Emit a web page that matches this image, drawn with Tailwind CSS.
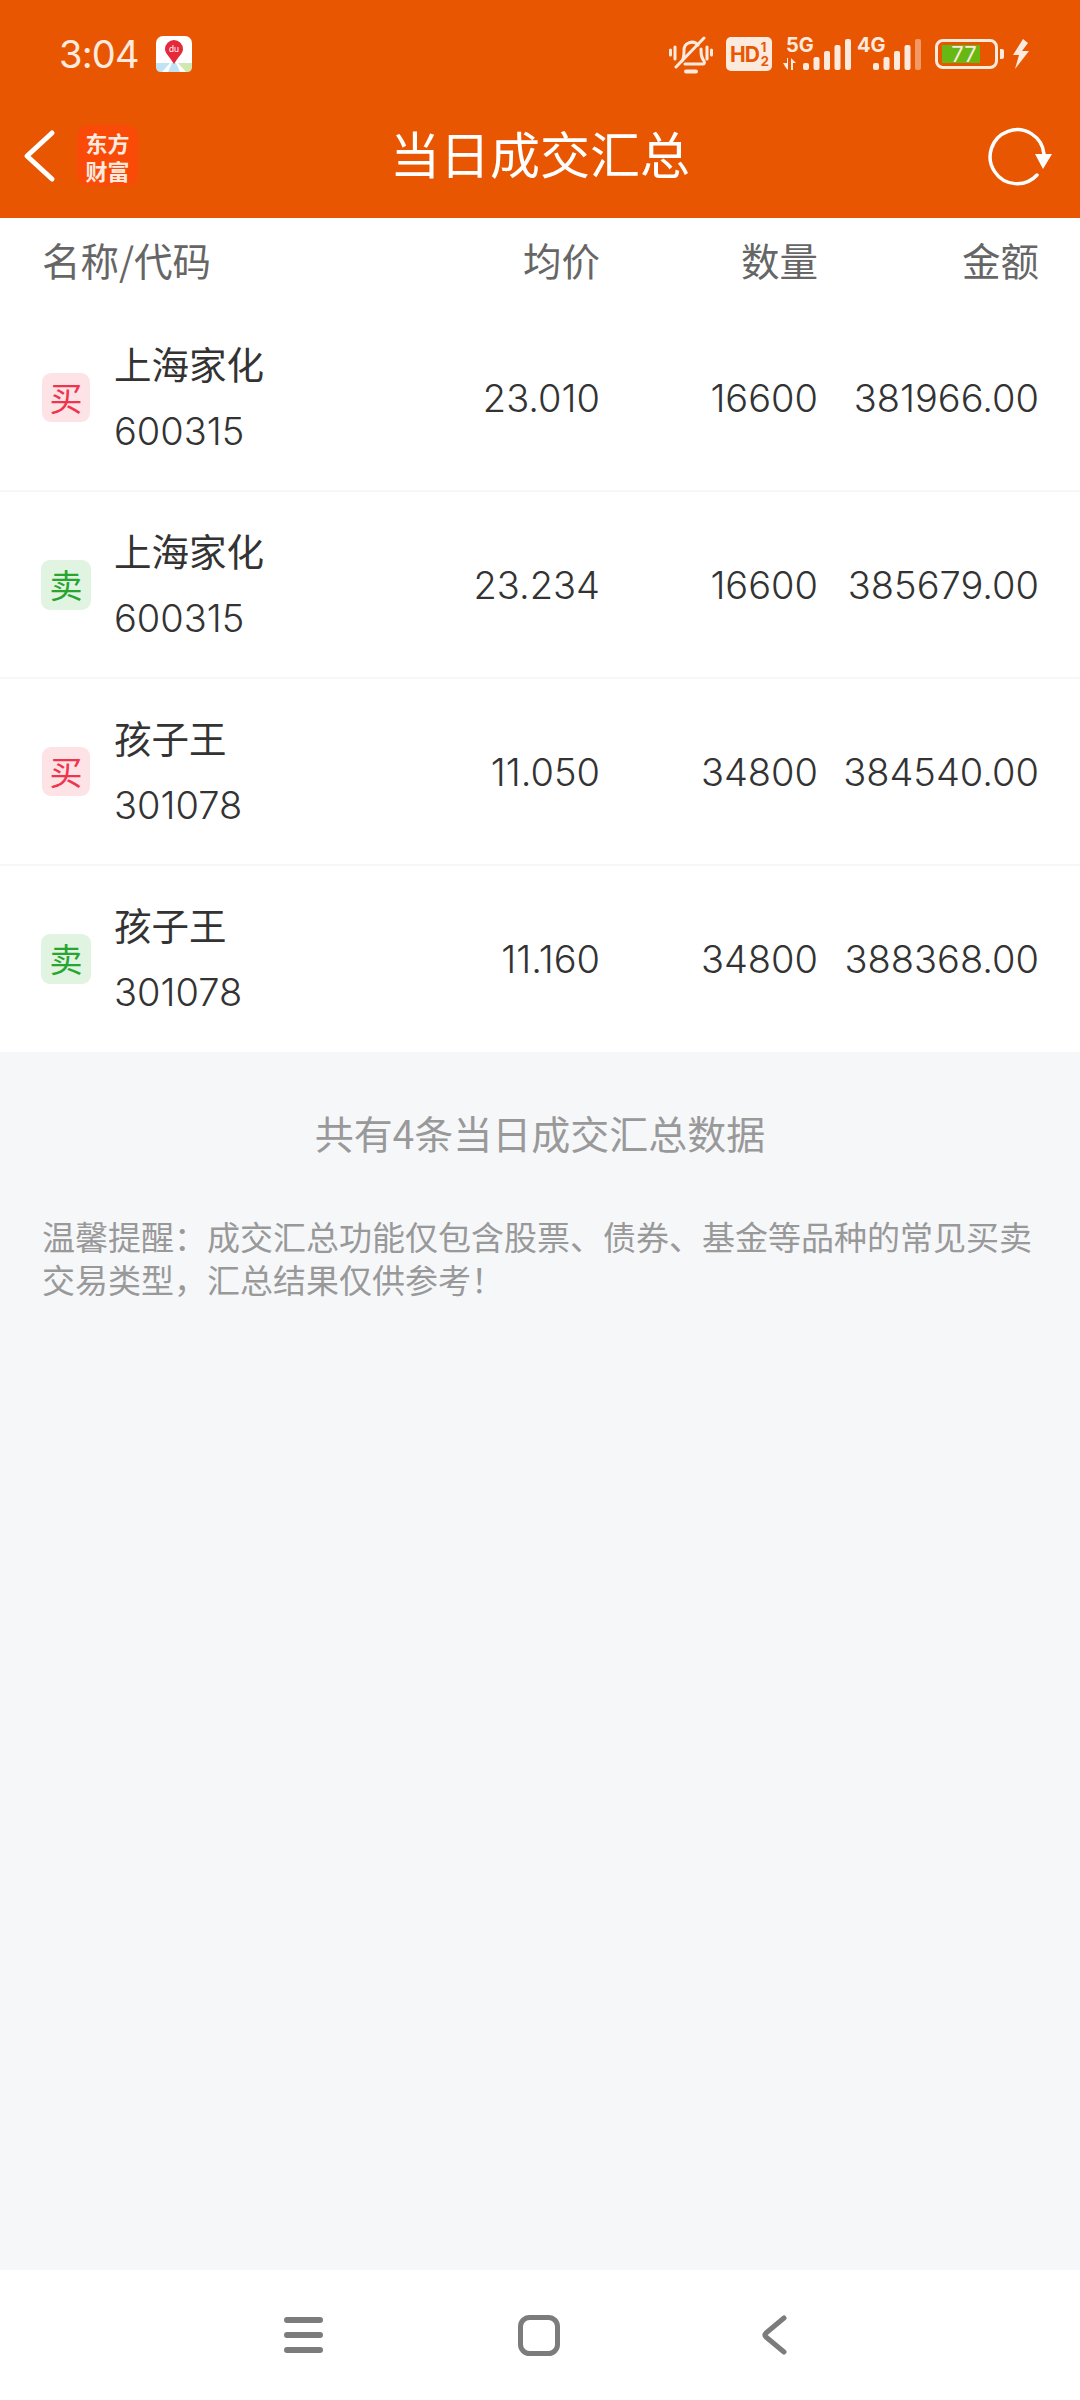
<!DOCTYPE html>
<html lang="zh"><head><meta charset="utf-8">
<script src="https://cdn.jsdelivr.net/npm/@tailwindcss/browser@4"></script></head>
<body class="m-0">
<div class="w-[1080px] h-[2400px] flex flex-col bg-[#f6f7f9] font-['Inter','Noto_Sans_CJK_SC',sans-serif] overflow-hidden">
  <!-- header -->
  <div class="h-[218px] bg-[#e95601] flex flex-col shrink-0">
    <div class="h-[108px] flex items-start pl-[59px] shrink-0">
      <span class="w-[78px] mt-[31px] text-[38px] leading-[46px] text-[#fdeadf] tracking-[-0.8px]">3:04</span>
      <svg class="ml-[19px] mt-[36px]" width="36" height="36" viewBox="0 0 36 36">
        <rect width="36" height="36" rx="7" fill="#fff"/>
        <path d="M0 27 L14 27 L6 36 L5 36 Q0 36 0 31Z" fill="#bfe3f5"/>
        <path d="M22 27 L36 27 L36 31 Q36 36 31 36 L30 36Z" fill="#cfe8b0"/>
        <path d="M16 27 L20 27 L24 36 L12 36Z" fill="#bfe3f5"/>
        <path d="M18 28 C13 20 9 17 9 13 A9 9 0 0 1 27 13 C27 17 23 20 18 28Z" fill="#e5283a"/>
        <text x="18" y="16" font-size="9" fill="#fff" text-anchor="middle" font-family="Liberation Sans">du</text>
      </svg>
      <svg class="ml-[477px] mt-[36px] shrink-0" width="44" height="38" viewBox="0 0 44 38" fill="none" stroke="#fdeadf" stroke-width="3" stroke-linecap="round">
        <path d="M1.500 14v5M6 11v12M38 11v12M42.500 14v5"/>
        <path d="M13 25c2-3 2-6 2-10a8 8 0 0 1 14-6M32 13c0 5 0 8 3 12 1 2 0 3-1 3H16"/>
        <path d="M7 31 L35 2"/>
        <path d="M17 35.500h10" stroke-width="4"/>
      </svg>
      <div class="ml-[13px] mt-[37px] w-[46px] h-[34px] shrink-0 rounded-[5px] bg-[#fdeadf] flex items-center pl-[4px] text-[#e95601] font-bold text-[21px] leading-none tracking-[-1px]">HD<span class="flex flex-col text-[13px] leading-[14px] ml-[2px]"><span>1</span><span>2</span></span></div>
      <svg class="ml-[11px] mt-[34px] shrink-0" width="68" height="38" viewBox="0 0 68 38" fill="#fdeadf">
        <text x="3" y="18" font-size="20" font-weight="700" font-family="Inter">5G</text>
        <path d="M4 24v5H0l3 5 2 2V24zM8 36V24l5 5h-3v7z"/>
        <rect x="20" y="29" width="6" height="7" rx="2"/><rect x="30.500" y="23" width="6" height="13" rx="2"/><rect x="41" y="17" width="6" height="19" rx="2"/><rect x="51.500" y="11" width="6" height="25" rx="2"/><rect x="62" y="5" width="6" height="31" rx="2"/>
      </svg>
      <svg class="ml-[5px] mt-[34px] shrink-0" width="66" height="38" viewBox="0 0 66 38" fill="#fdeadf">
        <text x="1" y="18" font-size="20" font-weight="700" font-family="Inter">4G</text>
        <rect x="17" y="29" width="6" height="7" rx="2"/><rect x="27.500" y="23" width="6" height="13" rx="2"/><rect x="38" y="17" width="6" height="19" rx="2"/><rect x="48.500" y="11" width="6" height="25" rx="2"/><rect x="59" y="5" width="6" height="31" rx="2" opacity=".45"/>
      </svg>
      <div class="ml-[13px] mt-[39px] w-[63px] h-[30px] shrink-0 rounded-[8px] border-[3px] border-[#fdeadf] pl-[4px] pt-[3px]">
        <div class="w-[38px] h-[18px] bg-[#68b814] flex items-center justify-center text-[#fdeadf] text-[22px] leading-none pl-[6px]">77</div>
      </div>
      <div class="ml-[2px] mt-[49px] w-[4px] h-[10px] shrink-0 rounded-r-[2px] bg-[#fdeadf]"></div>
      <svg class="ml-[8px] mt-[39px] shrink-0" width="18" height="30" viewBox="0 0 18 30" fill="#fdeadf"><path d="M11 0 L1 16 H7 L3 30 L17 12 H10 L16 4Z"/></svg>
    </div>
    <div class="h-[110px] grid grid-cols-[1fr_auto_1fr] items-start">
      <div class="flex items-start">
        <svg class="ml-[22px] mt-[21px]" width="34" height="54" viewBox="0 0 34 54" fill="none" stroke="#fff" stroke-width="5" stroke-linecap="round" stroke-linejoin="round"><path d="M30 4 L5 27 L30 50"/></svg>
        <div class="ml-[21px] mt-[17px] w-[61px] h-[61px] rounded-[12px] bg-[#fa4a08] flex items-center justify-center text-[#fdeadf] text-[22px] leading-[28px] font-bold text-center font-['Noto_Sans_CJK_SC',sans-serif]">东方<br>财富</div>
      </div>
      <span class="mt-[14px] text-[50px] leading-[60px] text-white font-['Noto_Sans_CJK_SC',sans-serif]">当日成交汇总</span>
      <div class="flex justify-end">
        <svg class="mr-[27px] mt-[18px]" width="67" height="62" viewBox="0 0 67 62" fill="none"><path d="M51 49 A27 27 0 1 1 58 28" stroke="#fff" stroke-width="3.500" stroke-linecap="round"/><path d="M49 28 H66 L57 43Z" fill="#fff"/></svg>
      </div>
    </div>
  </div>
  <!-- table -->
  <div class="bg-white shrink-0">
    <div class="h-[87px] grid grid-cols-[42px_1fr_160px_218px_221px_41px] items-center text-[38.500px] text-[#666] font-['Noto_Sans_CJK_SC',sans-serif] pb-[4px]">
      <div></div>
      <div>名称/代码</div>
      <div class="text-right">均价</div><div class="text-right">数量</div><div class="text-right">金额</div><div></div>
    </div>
    <div class="h-[187px] border-b-2 border-[#f6f7f9] grid grid-cols-[42px_72px_1fr_160px_218px_221px_41px] items-center text-[38px] font-light text-[#333]">
      <div></div>
      <div class="w-[48px] h-[49px] rounded-[9px] bg-[#fde3e6] text-[#f0344d] flex items-center justify-center text-[33px] font-normal font-['Noto_Sans_CJK_SC',sans-serif]">买</div>
      <div><div class="leading-[66px] text-[37.500px] font-normal font-['Noto_Sans_CJK_SC',sans-serif]">上海家化</div><div class="leading-[70px]">600315</div></div>
      <div class="text-right pt-px">23.010</div><div class="text-right pt-px">16600</div><div class="text-right pt-px">381966.00</div><div></div>
    </div>
    <div class="h-[187px] border-b-2 border-[#f6f7f9] grid grid-cols-[42px_72px_1fr_160px_218px_221px_41px] items-center text-[38px] font-light text-[#333]">
      <div></div>
      <div class="-ml-px w-[50px] h-[50px] rounded-[9px] bg-[#e1f4e2] text-[#27a52f] flex items-center justify-center text-[33px] font-normal font-['Noto_Sans_CJK_SC',sans-serif]">卖</div>
      <div><div class="leading-[66px] text-[37.500px] font-normal font-['Noto_Sans_CJK_SC',sans-serif]">上海家化</div><div class="leading-[70px]">600315</div></div>
      <div class="text-right pt-px">23.234</div><div class="text-right pt-px">16600</div><div class="text-right pt-px">385679.00</div><div></div>
    </div>
    <div class="h-[187px] border-b-2 border-[#f6f7f9] grid grid-cols-[42px_72px_1fr_160px_218px_221px_41px] items-center text-[38px] font-light text-[#333]">
      <div></div>
      <div class="w-[48px] h-[49px] rounded-[9px] bg-[#fde3e6] text-[#f0344d] flex items-center justify-center text-[33px] font-normal font-['Noto_Sans_CJK_SC',sans-serif]">买</div>
      <div><div class="leading-[66px] text-[37.500px] font-normal font-['Noto_Sans_CJK_SC',sans-serif]">孩子王</div><div class="leading-[70px]">301078</div></div>
      <div class="text-right pt-px">11.050</div><div class="text-right pt-px">34800</div><div class="text-right pt-px">384540.00</div><div></div>
    </div>
    <div class="h-[186px] grid grid-cols-[42px_72px_1fr_160px_218px_221px_41px] items-center text-[38px] font-light text-[#333]">
      <div></div>
      <div class="-ml-px w-[50px] h-[50px] rounded-[9px] bg-[#e1f4e2] text-[#27a52f] flex items-center justify-center text-[33px] font-normal font-['Noto_Sans_CJK_SC',sans-serif]">卖</div>
      <div><div class="leading-[66px] text-[37.500px] font-normal font-['Noto_Sans_CJK_SC',sans-serif]">孩子王</div><div class="leading-[70px]">301078</div></div>
      <div class="text-right pt-px">11.160</div><div class="text-right pt-px">34800</div><div class="text-right pt-px">388368.00</div><div></div>
    </div>
  </div>
  <!-- notes -->
  <div class="flex-1 px-[42px]">
    <div class="text-center text-[39px] leading-[50px] text-[#999] mt-[55px] font-['Noto_Sans_CJK_SC',sans-serif]">共有4条当日成交汇总数据</div>
    <div class="mt-[58px] text-[33px] leading-[43px] text-[#999] font-['Noto_Sans_CJK_SC',sans-serif]">温馨提醒：成交汇总功能仅包含股票、债券、基金等品种的常见买卖交易类型，汇总结果仅供参考！</div>
  </div>
  <!-- nav -->
  <div class="h-[130px] bg-white shrink-0 flex items-center pl-[284px]">
    <svg width="39" height="36" viewBox="0 0 39 36" fill="none" stroke="#7c7c7c" stroke-width="6" stroke-linecap="round"><path d="M3 3H36M3 18H36M3 33H36"/></svg>
    <svg class="ml-[195px]" width="42" height="41" viewBox="0 0 42 41" fill="none" stroke="#7c7c7c" stroke-width="5"><rect x="2.500" y="2.500" width="37" height="36" rx="9"/></svg>
    <svg class="ml-[202px]" width="25" height="40" viewBox="0 0 25 40" fill="none" stroke="#7c7c7c" stroke-width="5" stroke-linecap="round" stroke-linejoin="round"><path d="M22 3 L4 18 Q2 20 4 22 L22 37"/></svg>
  </div>
</div>
</body></html>
